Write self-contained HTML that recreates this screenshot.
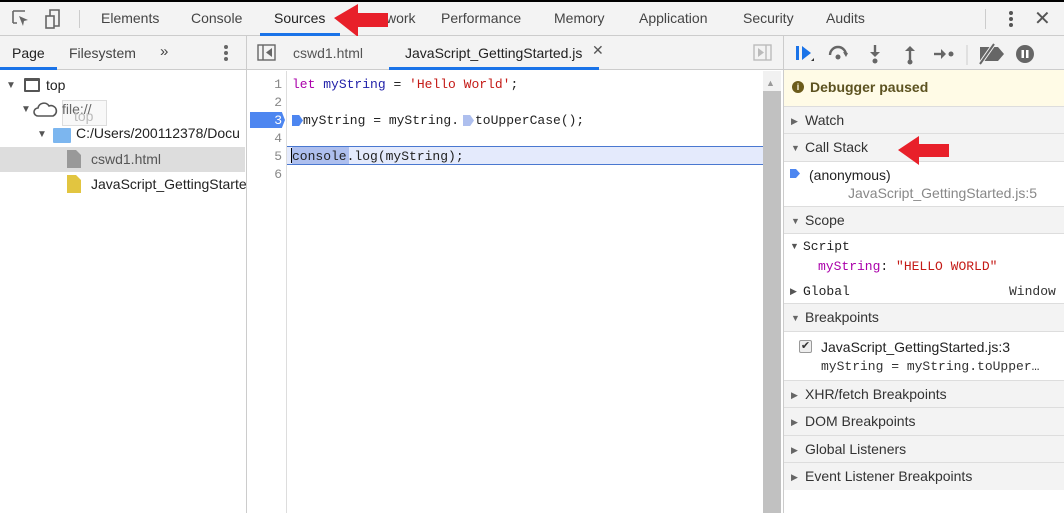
<!DOCTYPE html>
<html><head><style>
*{box-sizing:border-box;margin:0;padding:0}
body{width:1064px;height:513px;overflow:hidden;background:#fff;font-family:"Liberation Sans",sans-serif;font-size:14px;color:#333;position:relative}
.abs{position:absolute}
.mono{font-family:"Liberation Mono",monospace;font-size:13px}
.hdr{position:absolute;left:784px;width:280px;background:#f3f3f3;border-bottom:1px solid #ddd;padding-left:21px;line-height:27px;font-size:14px;color:#333}
.tri{position:absolute;left:7px;font-size:9px;color:#666}
</style></head><body>
<div class="abs" style="left:0;top:0;width:1064px;height:2px;background:#000"></div>
<!-- top toolbar -->
<div class="abs" style="left:0;top:2px;width:1064px;height:34px;background:#f3f3f3;border-bottom:1px solid #ccc"></div>
<svg class="abs" style="left:10px;top:8px" width="60" height="22"><path d="M3 3h12M3 3v12M3 15h4" stroke="#666" stroke-width="1.6" fill="none"/><path d="M9 8l9 4-4 1-1 5z" fill="#666"/><rect x="36" y="8" width="8" height="12" stroke="#666" stroke-width="1.6" fill="none"/><path d="M40 8V2h9v16h-5" stroke="#666" stroke-width="1.6" fill="none"/></svg>
<div class="abs" style="left:79px;top:10px;width:1px;height:18px;background:#ccc"></div>
<div class="abs" style="top:10px;left:101px;color:#444">Elements</div>
<div class="abs" style="top:10px;left:191px;color:#444">Console</div>
<div class="abs" style="top:10px;left:274px;color:#222">Sources</div>
<div class="abs" style="left:260px;top:33px;width:80px;height:3px;background:#1a73e8"></div>
<div class="abs" style="top:10px;left:386px;color:#444">work</div>
<div class="abs" style="top:10px;left:441px;color:#444">Performance</div>
<div class="abs" style="top:10px;left:554px;color:#444">Memory</div>
<div class="abs" style="top:10px;left:639px;color:#444">Application</div>
<div class="abs" style="top:10px;left:743px;color:#444">Security</div>
<div class="abs" style="top:10px;left:826px;color:#444">Audits</div>
<div class="abs" style="left:985px;top:9px;width:1px;height:20px;background:#ccc"></div>
<div class="abs" style="left:1009px;top:11px;width:4px;height:4px;border-radius:2px;background:#555;box-shadow:0 6px 0 #555,0 12px 0 #555"></div>
<div class="abs" style="left:1034px;top:6px;font-size:20px;color:#555">✕</div>
<svg class="abs" style="left:332px;top:2px" width="60" height="36"><path d="M2 16L26 2v9h30v14H26v10z" fill="#e8202a"/></svg>

<!-- left pane -->
<div class="abs" style="left:0;top:36px;width:246px;height:34px;background:#f3f3f3;border-bottom:1px solid #ccc"></div>
<div class="abs" style="left:12px;top:45px;color:#222">Page</div>
<div class="abs" style="left:0;top:67px;width:57px;height:3px;background:#1a73e8"></div>
<div class="abs" style="left:69px;top:45px;color:#444">Filesystem</div>
<div class="abs" style="left:160px;top:43px;color:#444;font-size:15px">»</div>
<div class="abs" style="left:224px;top:45px;width:4px;height:4px;border-radius:2px;background:#666;box-shadow:0 6px 0 #666,0 12px 0 #666"></div>
<div class="abs" style="left:246px;top:36px;width:1px;height:477px;background:#ccc"></div>
<div class="abs" style="left:6px;top:80px;font-size:10px;color:#555">▼</div>
<div class="abs" style="left:24px;top:78px;width:16px;height:14px;border:2px solid #555;border-top-width:3px;border-radius:1px"></div>
<div class="abs" style="left:46px;top:77px;color:#222">top</div>
<div class="abs" style="left:21px;top:104px;font-size:10px;color:#555">▼</div>
<svg class="abs" style="left:33px;top:101px" width="26" height="18"><path d="M5 15a4 4 0 010-8 6 6 0 0111-2 5 5 0 014 10z" fill="none" stroke="#555" stroke-width="1.6"/></svg>
<div class="abs" style="left:62px;top:100px;width:45px;height:26px;background:#f8f8f8;border:1px solid #ddd"></div>
<div class="abs" style="left:62px;top:101px;color:#666">file://</div>
<div class="abs" style="left:74px;top:108px;color:#bbb">top</div>
<div class="abs" style="left:37px;top:129px;font-size:10px;color:#555">▼</div>
<div class="abs" style="left:53px;top:128px;width:18px;height:15px;background:#7cb6ef;border-radius:1px"></div>
<div class="abs" style="left:76px;top:125px;color:#222;white-space:nowrap;width:170px;overflow:hidden">C:/Users/200112378/Docu</div>
<div class="abs" style="left:0;top:147px;width:245px;height:25px;background:#ddd"></div>
<svg class="abs" style="left:67px;top:150px" width="14" height="18"><path d="M0 0h9l5 5v13H0z" fill="#999"/></svg>
<div class="abs" style="left:91px;top:151px;color:#555">cswd1.html</div>
<svg class="abs" style="left:67px;top:175px" width="14" height="18"><path d="M0 0h9l5 5v13H0z" fill="#e2c540"/></svg>
<div class="abs" style="left:91px;top:176px;color:#222;white-space:nowrap;width:155px;overflow:hidden">JavaScript_GettingStarted</div>

<!-- middle -->
<div class="abs" style="left:247px;top:36px;width:537px;height:34px;background:#f3f3f3;border-bottom:1px solid #ccc"></div>
<svg class="abs" style="left:257px;top:44px" width="20" height="18"><rect x="1" y="1" width="17" height="15" fill="none" stroke="#666" stroke-width="1.4"/><path d="M6 1v15" stroke="#666" stroke-width="1.4"/><path d="M15 4v9l-6-4.5z" fill="#666"/></svg>
<div class="abs" style="left:293px;top:45px;color:#555">cswd1.html</div>
<div class="abs" style="left:405px;top:45px;color:#222">JavaScript_GettingStarted.js</div>
<div class="abs" style="left:592px;top:42px;color:#555;font-size:14px">✕</div>
<div class="abs" style="left:389px;top:67px;width:210px;height:3px;background:#1a73e8"></div>
<svg class="abs" style="left:753px;top:44px" width="20" height="18"><rect x="1" y="1" width="17" height="15" fill="none" stroke="#bbb" stroke-width="1.4"/><path d="M13 1v15" stroke="#bbb" stroke-width="1.4"/><path d="M5 4v9l6-4.5z" fill="#bbb"/></svg>
<div class="abs" style="left:247px;top:71px;width:40px;height:442px;border-right:1px solid #ddd"></div>
<div class="abs" style="left:763px;top:71px;width:18px;height:442px;background:#f1f1f1"></div>
<div class="abs" style="left:763px;top:91px;width:18px;height:422px;background:#c1c1c1"></div>
<div class="abs" style="left:766px;top:78px;font-size:9px;color:#999">▲</div>
<div class="abs" style="left:287px;top:146px;width:476px;height:19px;background:#e4eafc;border-top:1px solid #4a78d0;border-bottom:1px solid #4a78d0"></div>
<div class="abs" style="left:292px;top:147px;width:57px;height:17px;background:#aebfee"></div>
<div class="abs" style="left:291px;top:148px;width:1px;height:15px;background:#000"></div>
<div class="abs" style="left:250px;top:112px;width:35px;height:16px;background:#4d86f0;clip-path:polygon(0 0,91% 0,100% 50%,91% 100%,0 100%)"></div>
<div class="abs" style="left:292px;top:115px;width:11px;height:11px;background:#4d86f0;clip-path:polygon(0 0,65% 0,100% 50%,65% 100%,0 100%)"></div>
<div class="abs" style="left:463px;top:115px;width:11px;height:11px;background:#aebfee;clip-path:polygon(0 0,65% 0,100% 50%,65% 100%,0 100%)"></div>
<div class="abs mono" style="left:248px;top:76px;width:34px;text-align:right;line-height:18px;color:#888">1<br>2<br><span style="color:#fff">3</span><br>4<br>5<br>6</div>
<div class="abs mono" style="left:292px;top:76px;line-height:18px;white-space:pre;color:#222"><span style="color:#a0a">let</span> <span style="color:#22a">myString</span> = <span style="color:#c41a16">'Hello World'</span>;



console.log(myString);
</div>
<div class="abs mono" style="left:303px;top:112px;line-height:18px;white-space:pre;color:#222">myString = myString.</div>
<div class="abs mono" style="left:475px;top:112px;line-height:18px;white-space:pre;color:#222">toUpperCase();</div>

<!-- right -->
<div class="abs" style="left:783px;top:36px;width:1px;height:477px;background:#ccc"></div>
<div class="abs" style="left:784px;top:36px;width:280px;height:34px;background:#f3f3f3;border-bottom:1px solid #ccc"></div>
<svg class="abs" style="left:794px;top:42px" width="280" height="24"><rect x="2" y="4" width="3" height="14" fill="#1a73e8"/><path d="M8 4l9 7-9 7z" fill="#1a73e8"/><path d="M17 19l3-3v3z" fill="#333"/>
<path d="M36 13a8 8 0 0116 0" stroke="#666" stroke-width="2.4" fill="none"/><path d="M49 10l5 1-2 4z" fill="#666"/><circle cx="44" cy="15" r="2.5" fill="#666"/>
<path d="M81 3v10" stroke="#666" stroke-width="2.4"/><path d="M76 10l5 5 5-5z" fill="#666"/><circle cx="81" cy="19" r="2.5" fill="#666"/>
<path d="M116 9v9" stroke="#666" stroke-width="2.4"/><path d="M111 9l5-5 5 5z" fill="#666"/><circle cx="116" cy="20" r="2.5" fill="#666"/>
<path d="M140 12h9" stroke="#666" stroke-width="2.4"/><path d="M147 7l5 5-5 5z" fill="#666"/><circle cx="157" cy="12" r="2.5" fill="#666"/>
<path d="M173 3v20" stroke="#ccc"/>
<path d="M186 5h18l6 7-6 7h-18z" fill="#666"/><path d="M186 22l14-20" stroke="#f3f3f3" stroke-width="4"/><path d="M186 22l14-20" stroke="#666" stroke-width="2"/>
<circle cx="231" cy="12" r="9" fill="#666"/><rect x="227.5" y="8" width="2.5" height="8" fill="#fff"/><rect x="232" y="8" width="2.5" height="8" fill="#fff"/></svg>
<div class="abs" style="left:784px;top:70px;width:280px;height:37px;background:#fffbe6;border-bottom:1px solid #ddd"></div>
<div class="abs" style="left:792px;top:81px;width:12px;height:12px;border-radius:6px;background:#6b5b1a;color:#fffbe6;font-size:9px;text-align:center;line-height:12px;font-weight:bold">i</div>
<div class="abs" style="left:810px;top:79px;font-weight:bold;color:#5c5220">Debugger paused</div>
<div class="hdr" style="top:107px;height:27px"><span class="tri" style="top:1px">▶</span>Watch</div>
<div class="hdr" style="top:134px;height:28px"><span class="tri" style="top:1px">▼</span>Call Stack</div>
<svg class="abs" style="left:897px;top:134px" width="56" height="32"><path d="M1 16L22 2v8h30v13H22v8z" fill="#e8202a"/></svg>
<div class="abs" style="left:790px;top:169px;width:10px;height:9px;background:#4d86f0;clip-path:polygon(0 0,60% 0,100% 50%,60% 100%,0 100%)"></div>
<div class="abs" style="left:809px;top:167px;color:#222">(anonymous)</div>
<div class="abs" style="left:848px;top:185px;color:#888">JavaScript_GettingStarted.js:5</div>
<div class="abs" style="left:784px;top:206px;width:280px;height:1px;background:#ddd"></div>
<div class="hdr" style="top:207px;height:27px"><span class="tri" style="top:1px">▼</span>Scope</div>
<div class="abs" style="left:790px;top:241px;font-size:9px;color:#555">▼</div>
<div class="abs mono" style="left:803px;top:239px;color:#222">Script</div>
<div class="abs mono" style="left:818px;top:259px;color:#222"><span style="color:#a0a">myString</span>: <span style="color:#c41a16">"HELLO WORLD"</span></div>
<div class="abs" style="left:790px;top:286px;font-size:9px;color:#555">▶</div>
<div class="abs mono" style="left:803px;top:284px;color:#222">Global</div>
<div class="abs mono" style="left:1009px;top:284px;color:#333">Window</div>
<div class="abs" style="left:784px;top:303px;width:280px;height:1px;background:#ddd"></div>
<div class="hdr" style="top:304px;height:28px"><span class="tri" style="top:1px">▼</span>Breakpoints</div>
<div class="abs" style="left:799px;top:340px;width:13px;height:13px;border:1px solid #999;border-radius:2px;background:#eee;font-size:11px;line-height:11px;text-align:center;color:#333">✔</div>
<div class="abs" style="left:821px;top:339px;color:#222">JavaScript_GettingStarted.js:3</div>
<div class="abs mono" style="left:821px;top:359px;color:#333">myString = myString.toUpper…</div>
<div class="abs" style="left:784px;top:380px;width:280px;height:1px;background:#ddd"></div>
<div class="hdr" style="top:381px;height:27px"><span class="tri" style="top:1px">▶</span>XHR/fetch Breakpoints</div>
<div class="hdr" style="top:408px;height:28px"><span class="tri" style="top:1px">▶</span>DOM Breakpoints</div>
<div class="hdr" style="top:436px;height:27px"><span class="tri" style="top:1px">▶</span>Global Listeners</div>
<div class="hdr" style="top:463px;height:27px;border-bottom:none"><span class="tri" style="top:1px">▶</span>Event Listener Breakpoints</div>
</body></html>
